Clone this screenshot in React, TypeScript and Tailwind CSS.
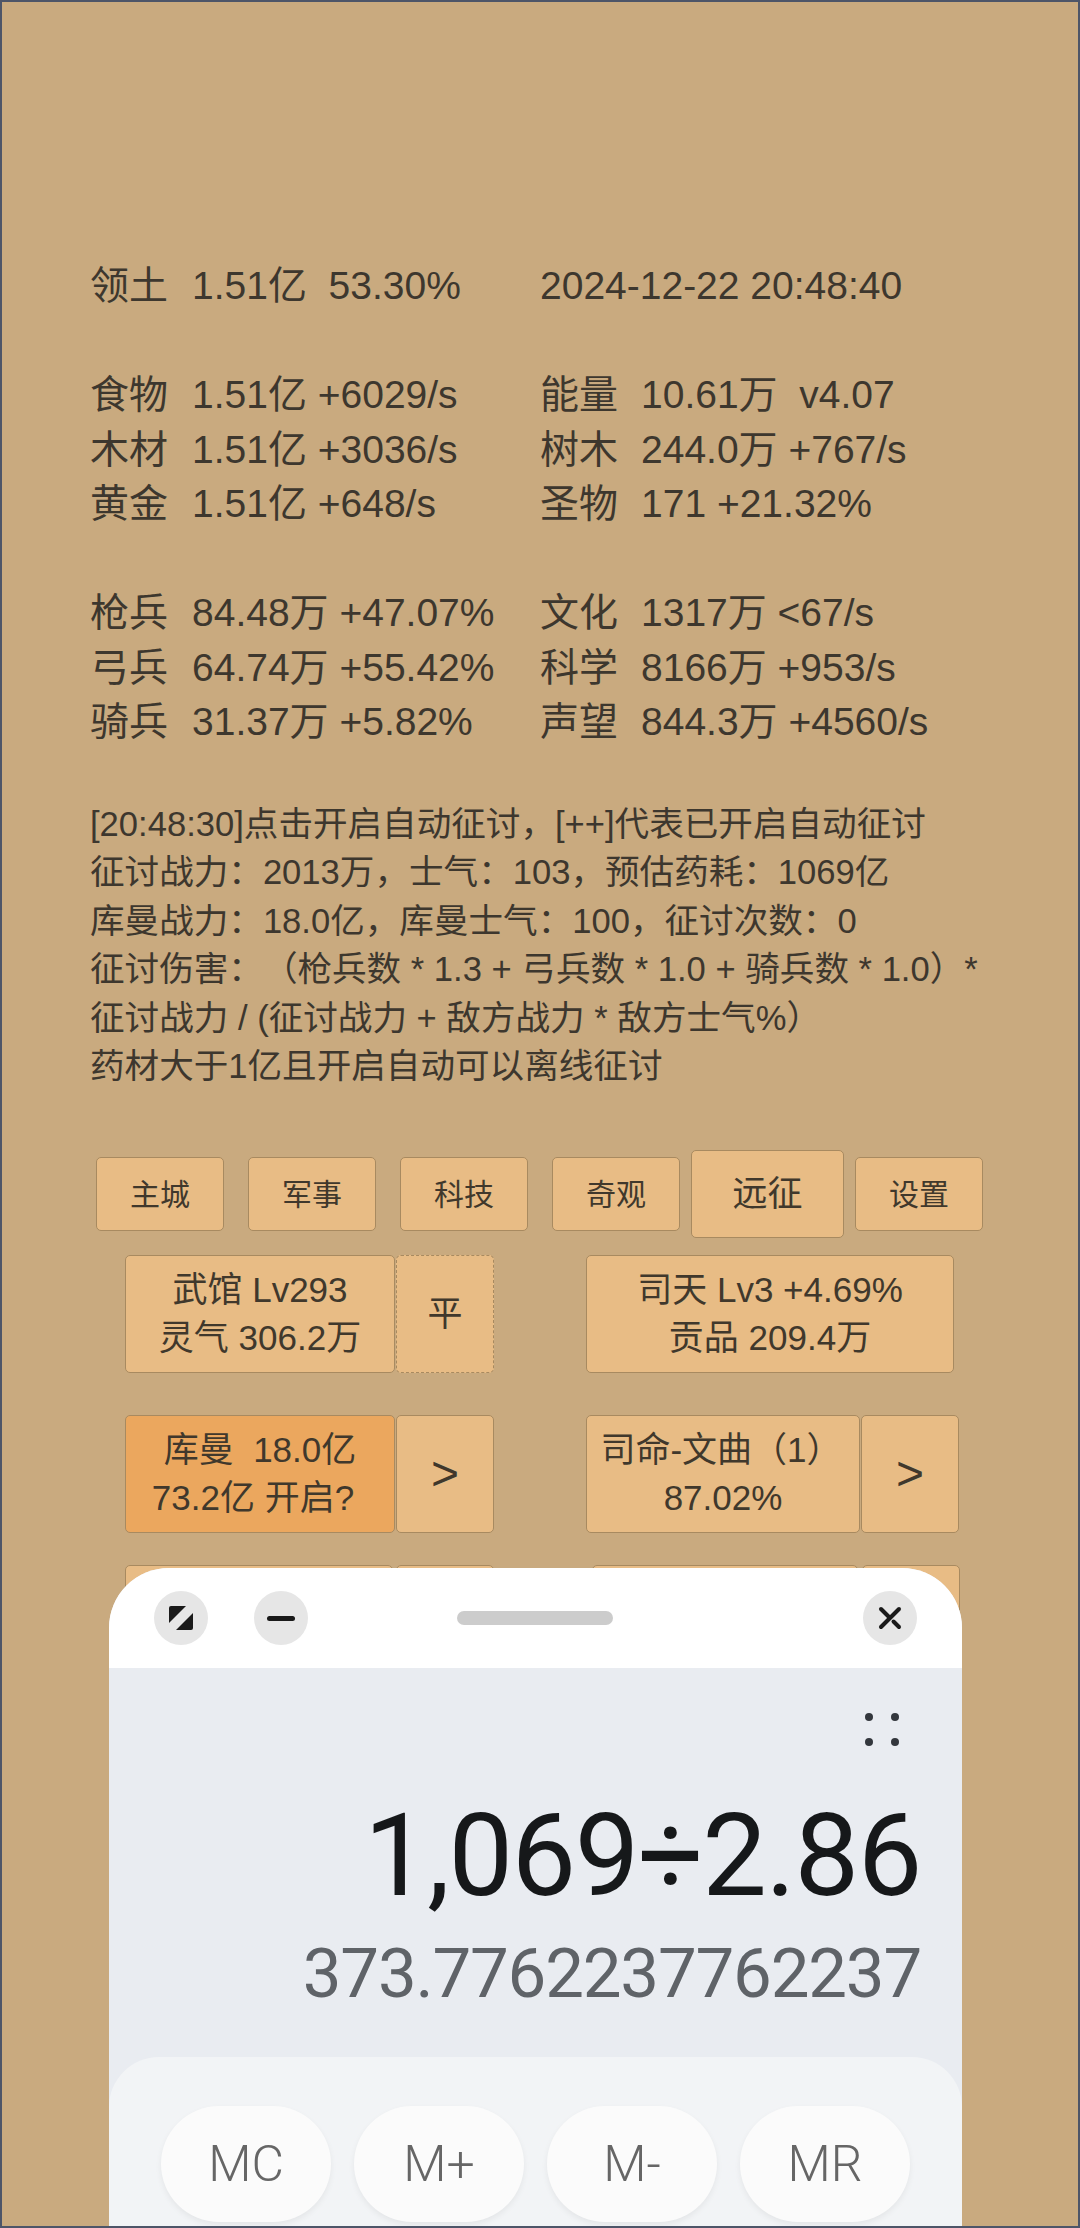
const sans = "font-['Liberation_Sans','Noto_Sans_CJK_SC',sans-serif]";

const statRows = [
  { left: ["领土", "1.51亿  53.30%"], right: ["", "2024-12-22 20:48:40"], gap: false },
  { left: ["食物", "1.51亿 +6029/s"], right: ["能量", "10.61万  v4.07"], gap: true },
  { left: ["木材", "1.51亿 +3036/s"], right: ["树木", "244.0万 +767/s"], gap: false },
  { left: ["黄金", "1.51亿 +648/s"], right: ["圣物", "171 +21.32%"], gap: false },
  { left: ["枪兵", "84.48万 +47.07%"], right: ["文化", "1317万 <67/s"], gap: true },
  { left: ["弓兵", "64.74万 +55.42%"], right: ["科学", "8166万 +953/s"], gap: false },
  { left: ["骑兵", "31.37万 +5.82%"], right: ["声望", "844.3万 +4560/s"], gap: false },
];

const logLines = [
  "[20:48:30]点击开启自动征讨，[++]代表已开启自动征讨",
  "征讨战力：2013万，士气：103，预估药耗：1069亿",
  "库曼战力：18.0亿，库曼士气：100，征讨次数：0",
  "征讨伤害：（枪兵数 * 1.3 + 弓兵数 * 1.0 + 骑兵数 * 1.0）*",
  "征讨战力 / (征讨战力 + 敌方战力 * 敌方士气%）",
  "药材大于1亿且开启自动可以离线征讨",
];

const btn = "flex flex-col items-center justify-center rounded-[5px] border border-[#a88a60] bg-[#e8bc85] text-[#40382c]";

const NavBtn = ({ label, active }: { label: string; active?: boolean }) => (
  <div
    className={
      active
        ? `${btn} h-[88px] w-[153px] ml-[11px] text-[35px]`
        : `${btn} h-[74px] w-[128px] text-[30px]`
    }
  >
    {label}
  </div>
);

const MemoryBtn = ({ label }: { label: string }) => (
  <div className="flex h-[116px] w-[170px] items-center justify-center rounded-full bg-[#fbfbfb] text-[50px] font-light text-[#666666] shadow-[0_3px_6px_rgba(0,0,0,0.06)]">
    {label}
  </div>
);

const RoundIcon = ({ children }: { children: React.ReactNode }) => (
  <div className="flex h-[54px] w-[54px] items-center justify-center rounded-full bg-[#e6e6e6]">
    {children}
  </div>
);

export default function App() {
  return (
    <div className={`relative h-[2228px] w-[1080px] overflow-hidden border-2 border-[#4d5568] bg-[#c9aa7f] [text-spacing-trim:space-all] ${sans}`}>
      <div className="pl-[88px] pt-[257px] text-[39px] leading-[54.5px] text-[#3d372e]">
        {statRows.map((row) => (
          <div key={row.left[0]} className={`flex whitespace-pre ${row.gap ? "mt-[54.5px]" : ""}`}>
            <div className="flex w-[450px]">
              <span className="w-[102px]">{row.left[0]}</span>
              <span>{row.left[1]}</span>
            </div>
            <div className="flex">
              {row.right[0] && <span className="w-[101px]">{row.right[0]}</span>}
              <span>{row.right[1]}</span>
            </div>
          </div>
        ))}
      </div>

      <div className="mt-[50px] pl-[88px] text-[34.6px] leading-[48.6px] text-[#3d372e] whitespace-pre">
        {logLines.map((line) => (
          <div key={line}>{line}</div>
        ))}
      </div>

      <div className="mt-[59px] flex h-[88px] items-center gap-[24px] pl-[94px]">
        <NavBtn label="主城" />
        <NavBtn label="军事" />
        <NavBtn label="科技" />
        <div className="flex items-center">
          <NavBtn label="奇观" />
          <NavBtn label="远征" active />
          <div className="ml-[11px]">
            <NavBtn label="设置" />
          </div>
        </div>
      </div>

      <div className="mt-[17px] flex pl-[123px] text-[35px] leading-[48px]">
        <div className={`${btn} h-[118px] w-[270px]`}>
          <span>武馆 Lv293</span>
          <span>灵气 306.2万</span>
        </div>
        <div className={`${btn} ml-px h-[118px] w-[98px] border-dashed`}>平</div>
        <div className={`${btn} ml-[92px] h-[118px] w-[368px]`}>
          <span>司天 Lv3 +4.69%</span>
          <span>贡品 209.4万</span>
        </div>
      </div>

      <div className="mt-[42px] flex pl-[123px] text-[35px] leading-[48px]">
        <div className={`${btn} h-[118px] w-[270px] !bg-[#eba75e]`}>
          <span className="whitespace-pre">库曼  18.0亿</span>
          <span className="-ml-[14px]">73.2亿 开启?</span>
        </div>
        <div className={`${btn} ml-px h-[118px] w-[98px] text-[48px]`}>&gt;</div>
        <div className={`${btn} ml-[92px] h-[118px] w-[274px]`}>
          <span className="-ml-[4px]">司命-文曲（1）</span>
          <span>87.02%</span>
        </div>
        <div className={`${btn} ml-px h-[118px] w-[98px] text-[48px]`}>&gt;</div>
      </div>

      <div className="mt-[32px] flex pl-[123px]">
        <div className={`${btn} h-[118px] w-[268px]`} />
        <div className={`${btn} ml-[3px] h-[118px] w-[98px]`} />
        <div className={`${btn} ml-[98px] h-[118px] w-[266px]`} />
        <div className={`${btn} ml-[4px] h-[118px] w-[98px]`} />
      </div>

      {/* floating calculator window */}
      <div className="absolute left-[107px] top-[1566px] h-[680px] w-[853px] overflow-hidden rounded-t-[60px] bg-[#e9ecf1] font-['Roboto','Noto_Sans',sans-serif]">
        <div className="relative flex h-[100px] items-center bg-white pl-[45px]">
          <RoundIcon>
            <svg width="24" height="24" viewBox="0 0 24 24">
              <path d="M2 0H17L0 17V2a2 2 0 0 1 2-2Z" fill="#1a1a1a" />
              <path d="M24 7V22a2 2 0 0 1-2 2H7Z" fill="#1a1a1a" />
            </svg>
          </RoundIcon>
          <div className="ml-[46px]">
            <RoundIcon>
              <div className="h-[5px] w-[28px] rounded-full bg-[#1a1a1a]" />
            </RoundIcon>
          </div>
          <div className="ml-[149px] h-[14px] w-[156px] rounded-full bg-[#cccccc]" />
          <div className="ml-auto mr-[45px]">
            <RoundIcon>
              <svg width="24" height="24" viewBox="0 0 24 24" fill="none" stroke="#1a1a1a" strokeWidth="4" strokeLinecap="round">
                <path d="M3 21 21 3" />
                <path d="M3 3 11 11" />
                <path d="M15.5 15.5 21 21" />
              </svg>
            </RoundIcon>
          </div>
        </div>

        <div className="flex justify-end pr-[63px] pt-[45px]">
          <div className="grid grid-cols-2 gap-x-[18px] gap-y-[17px]">
            <div className="h-[8px] w-[8px] rounded-full bg-[#33373d]" />
            <div className="h-[8px] w-[8px] rounded-full bg-[#33373d]" />
            <div className="h-[8px] w-[8px] rounded-full bg-[#33373d]" />
            <div className="h-[8px] w-[8px] rounded-full bg-[#33373d]" />
          </div>
        </div>

        <div className="mt-[42px] pr-[41px] text-right text-[115px] leading-[136px] tracking-[-1.4px] text-[#16181a]">1,069÷2.86</div>
        <div className="mt-[8px] pr-[41px] text-right text-[69px] leading-[84px] tracking-[-1.2px] text-[#5f6368]">373.7762237762237</div>

        <div className="mt-[41px] flex h-[300px] justify-center gap-[23px] rounded-t-[50px] bg-[#f2f4f6] pt-[49px]">
          <MemoryBtn label="MC" />
          <MemoryBtn label="M+" />
          <MemoryBtn label="M-" />
          <MemoryBtn label="MR" />
        </div>
      </div>
    </div>
  );
}
